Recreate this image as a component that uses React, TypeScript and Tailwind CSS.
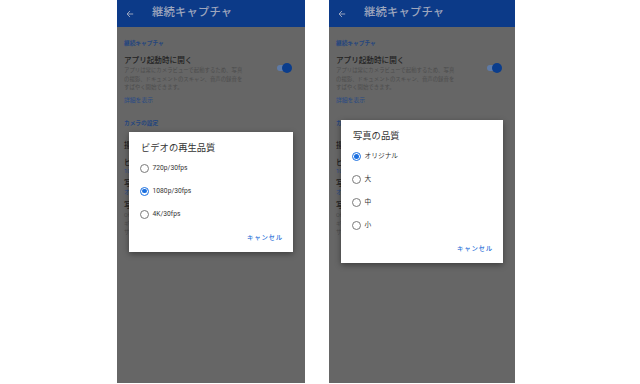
const FONT = { fontFamily: 'Roboto, "Noto Sans CJK JP", sans-serif' };

function Toggle() {
  return (
    <div className="relative h-[10px] w-[15px] shrink-0">
      <div className="absolute left-0 top-[2px] h-[6px] w-[13px] rounded-full bg-[#5f7ba6]" />
      <div className="absolute right-0 top-0 h-[10px] w-[10px] rounded-full bg-[#0b3d8c]" />
    </div>
  );
}

function Radio({ checked }: { checked: boolean }) {
  return checked ? (
    <div className="flex h-[9px] w-[9px] items-center justify-center rounded-full border-[1.3px] border-[#1a6fe0]">
      <div className="h-[4.6px] w-[4.6px] rounded-full bg-[#1a6fe0]" />
    </div>
  ) : (
    <div className="h-[9px] w-[9px] rounded-full border-[1px] border-[#7a7a7a]" />
  );
}

function Dialog(props: { title: string; options: string[]; selected: number; width: string }) {
  return (
    <div className={`${props.width} bg-white pt-[10px] pb-[9px] shadow-[0_2px_6px_rgba(0,0,0,0.4)]`}>
      <div className="px-[12px] text-[9.3px] leading-[12px] text-[#333333]">{props.title}</div>
      <div className="mt-[3px]">
        {props.options.map((o, i) => (
          <div key={o} className="flex h-[23px] items-center pl-[11px]">
            <Radio checked={i === props.selected} />
            <span className="ml-[3.6px] text-[6.7px] text-[#333333]">{o}</span>
          </div>
        ))}
      </div>
      <div className="mt-[7px] flex justify-end pr-[10px]">
        <span className="text-[6.4px] font-medium leading-[10px] tracking-[0.8px] text-[#2a6fd8]">キャンセル</span>
      </div>
    </div>
  );
}

function Phone(props: { width: string; children: any }) {
  return (
    <div className={`relative h-[383px] ${props.width} overflow-hidden bg-[#666666]`}>
      <div className="flex h-[27px] items-center bg-[#0c3a88]">
        <svg width="8" height="8" viewBox="0 0 10 10" className="ml-[9px]">
          <path d="M9 5H1.5M5 1.2 1.3 5 5 8.8" stroke="#9ea7bf" strokeWidth="1.2" fill="none" />
        </svg>
        <span className="ml-[18px] text-[11.3px] font-medium tracking-[0.2px] text-[#9ea6bd]">継続キャプチャ</span>
      </div>
      <div className="pl-[7px] pr-[13px]">
        <div className="mt-[12px] text-[5.7px] font-bold leading-[8px] text-[#24457e]">継続キャプチャ</div>
        <div className="mt-[9px] flex items-start justify-between">
          <div>
            <div className="text-[7.6px] font-medium leading-[10px] text-[#1f1f1f]">アプリ起動時に開く</div>
            <div className="text-[5.4px] leading-[8.5px] text-[#4c4c4c]">
              アプリは常にカメラビューで起動するため、写真
              <br />
              の撮影、ドキュメントのスキャン、音声の録音を
              <br />
              すばやく開始できます。
            </div>
          </div>
          <div className="mt-[7px]">
            <Toggle />
          </div>
        </div>
        <div className="mt-[4px] text-[5.8px] leading-[8px] text-[#284a85]">詳細を表示</div>
        <div className="mt-[15px] text-[5.7px] font-bold leading-[8px] text-[#24457e]">カメラの設定</div>
        <div className="mt-[14.5px] flex items-center justify-between">
          <div className="text-[7.6px] font-medium leading-[10px] text-[#1f1f1f]">撮影時に音を鳴らす</div>
          <Toggle />
        </div>
        <div className="mt-[7px] text-[7.6px] font-medium leading-[10px] text-[#1f1f1f]">ビデオの再生品質</div>
        <div className="text-[5.7px] leading-[7px] text-[#284a85]">1080p/30fps</div>
        <div className="mt-[4px] text-[7.6px] font-medium leading-[10px] text-[#1f1f1f]">写真の品質</div>
        <div className="text-[5.7px] leading-[7px] text-[#284a85]">オリジナル</div>
        <div className="mt-[5px] flex items-start justify-between">
          <div>
            <div className="text-[7.6px] font-medium leading-[10px] text-[#1f1f1f]">写真をギャラリーに保存</div>
            <div className="text-[5.4px] leading-[8.5px] text-[#4c4c4c]">
              Office Lens で撮影した写真をデバイスの
              <br />
              ギャラリーにも保存します。保存先は
              <br />
              サポートされている場所から選べます。
            </div>
          </div>
          <div className="mt-[6px]">
            <Toggle />
          </div>
        </div>
      </div>
      <div className="absolute inset-0 flex items-center justify-center">{props.children}</div>
    </div>
  );
}

export default function App() {
  return (
    <div className="flex h-[384px] w-[640px] gap-[24px] bg-white pl-[117px]" style={FONT}>
      <Phone width="w-[188px]">
        <Dialog
          width="w-[164px]"
          title="ビデオの再生品質"
          options={["720p/30fps", "1080p/30fps", "4K/30fps"]}
          selected={1}
        />
      </Phone>
      <Phone width="w-[186px]">
        <Dialog width="w-[162px]" title="写真の品質" options={["オリジナル", "大", "中", "小"]} selected={0} />
      </Phone>
    </div>
  );
}
